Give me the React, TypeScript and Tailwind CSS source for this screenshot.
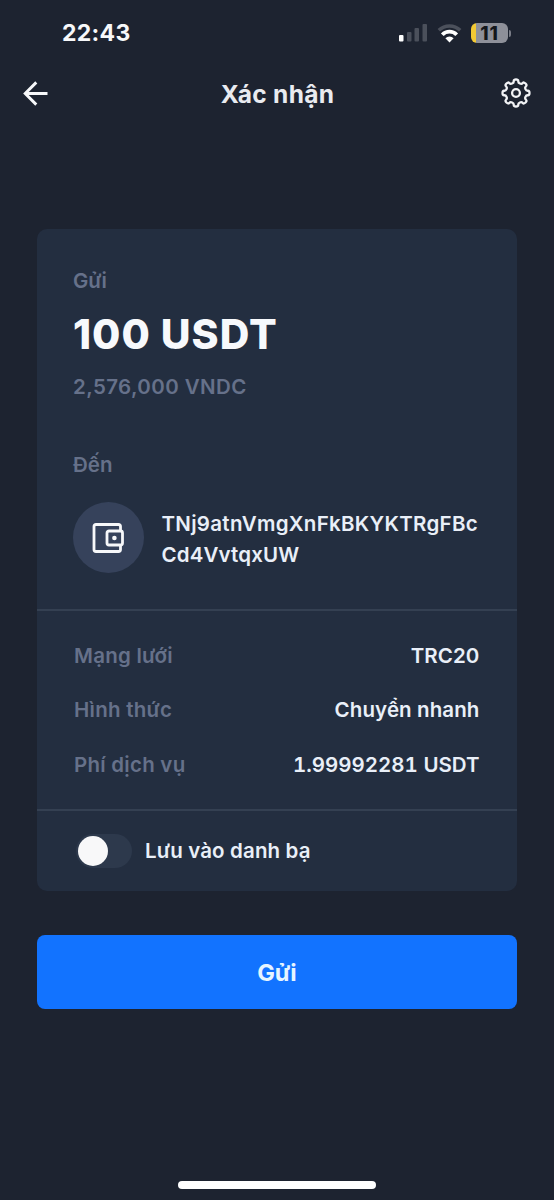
import { useState } from 'react';

const details = [
  { label: 'Mạng lưới', value: 'TRC20', spacing: 'tracking-[0.1px]' },
  { label: 'Hình thức', value: 'Chuyển nhanh', spacing: 'tracking-[0.1px]' },
  { label: 'Phí dịch vụ', value: '1.99992281 USDT', spacing: 'tracking-normal tabular-nums' },
];

// Rounded eight-tooth outline, smoothed through the midpoints of its corners
function gearPath() {
  const corners: [number, number][] = [];
  for (let i = 0; i < 8; i++) {
    const base = i * 45 - 90;
    [[-10, 13.7], [10, 13.7], [12, 10.4], [33, 10.4]].forEach(([deg, r]) => {
      const a = ((base + deg) * Math.PI) / 180;
      corners.push([15 + r * Math.cos(a), 15 + r * Math.sin(a)]);
    });
  }
  const mid = (i: number) => {
    const [a, b] = [corners[i % 32], corners[(i + 1) % 32]];
    return `${((a[0] + b[0]) / 2).toFixed(2)} ${((a[1] + b[1]) / 2).toFixed(2)}`;
  };
  return `M${mid(31)}` + corners.map((c, i) => `Q${c[0].toFixed(2)} ${c[1].toFixed(2)} ${mid(i)}`).join('') + 'Z';
}

function StatusBar() {
  return (
    <div className="flex h-[66px] items-center justify-between pl-[62px] pr-[43px]">
      <span className="pt-px text-[23px] font-bold leading-none tracking-[0.3px] text-[#f7f8fa]">22:43</span>
      <div className="flex items-center">
        <svg width="28" height="18" viewBox="0 0 28 18">
          <rect x="0" y="11" width="4.5" height="6.5" rx="1" fill="#fff" />
          <rect x="8" y="8" width="4.5" height="9.5" rx="1" fill="#4b505b" />
          <rect x="15.5" y="4" width="4.5" height="13.5" rx="1" fill="#4b505b" />
          <rect x="23.5" y="0" width="4.5" height="17.5" rx="1" fill="#4b505b" />
        </svg>
        <svg className="ml-2.5" width="25" height="19" viewBox="0 0 25 19">
          <path d="M1.8 6.3A15.5 15.5 0 0 1 23.2 6.3" fill="none" stroke="#4b505b" strokeWidth="3.6" />
          <path d="M5.3 10.7A10 10 0 0 1 19.7 10.7" fill="none" stroke="#fff" strokeWidth="3.8" />
          <path d="M8.4 14.3A5.5 5.5 0 0 1 16.6 14.3L12.5 18.4Z" fill="#fff" />
        </svg>
        <div className="ml-[9px] flex h-5 w-[37px] items-center justify-center rounded-md bg-linear-to-r from-[#f3c934] from-14% to-[#8e9099] to-14% text-[19px] font-extrabold leading-none tracking-[0.8px] text-[#14161b]">
          11
        </div>
        <div className="ml-[1px] h-[7px] w-[2px] rounded-r-full bg-[#7a7d87]" />
      </div>
    </div>
  );
}

function Header() {
  return (
    <div className="flex h-[54px] items-center justify-between pl-[23px] pr-[23px]">
      <button aria-label="Quay lại">
        <svg width="26" height="26" viewBox="0 0 26 26" fill="none" stroke="#f7f8fa" strokeWidth="2.9">
          <path d="M24.5 13.5H2.5M13.3 2.4L2.2 13.5L13.3 24.6" />
        </svg>
      </button>
      <h1 className="pl-[5px] pt-0.5 text-[24.5px] font-bold leading-none tracking-[0.3px] text-[#e9ebf0]">Xác nhận</h1>
      <button aria-label="Cài đặt">
        <svg width="30" height="30" viewBox="0 0 30 30" fill="none" stroke="#f2f3f6" strokeWidth="2.3">
          <path d={gearPath()} />
          <circle cx="15" cy="15" r="3.9" />
        </svg>
      </button>
    </div>
  );
}

export default function App() {
  const [saved, setSaved] = useState(false);

  return (
    <div className="flex h-[1200px] w-full flex-col bg-[#1d2330] font-['Inter','Liberation_Sans',sans-serif]">
      <StatusBar />
      <Header />

      <main className="mt-[109px] flex flex-col px-[37px]">
        <section className="h-[662px] rounded-[10px] bg-[#232e40]">
          {/* Amount and recipient */}
          <div className="h-[380px] px-9 pt-[37px]">
            <p className="text-[20.5px] font-semibold leading-[30px] text-[#66718a]">Gửi</p>
            <p className="mt-[11px] text-[41px] font-extrabold leading-[54px] tracking-[1px] text-[#f7f9fc]">100 USDT</p>
            <p className="mt-[11px] text-[20.5px] font-semibold leading-[30px] tracking-[0.4px] text-[#66718a]">2,576,000 VNDC</p>
            <p className="mt-12 text-[20.5px] font-semibold leading-[30px] text-[#66718a]">Đến</p>
            <div className="mt-[22px] flex items-center">
              <div className="flex size-[71px] shrink-0 items-center justify-center rounded-full bg-[#36425b]">
                <svg className="-translate-x-px" width="32" height="30" viewBox="0 0 32 30" fill="none" stroke="#f7f8fa" strokeWidth="2.8" strokeLinejoin="round">
                  <path d="M28.5 8V3.5Q28.5 1.5 26.5 1.5H4Q2 1.5 2 3.5V26.5Q2 28.5 4 28.5H26.5Q28.5 28.5 28.5 26.5V22" />
                  <rect x="15" y="8" width="15.5" height="14" rx="2" />
                  <circle cx="22.4" cy="15" r="2.3" fill="#f7f8fa" stroke="none" />
                </svg>
              </div>
              <p className="ml-[17.5px] pt-0.5 text-[20.5px] font-semibold leading-[31px] tracking-[0.3px] text-[#e9eff8]">
                TNj9atnVmgXnFkBKYKTRgFBc
                <br />
                <span className="tracking-[0.15px]">Cd4VvtqxUW</span>
              </p>
            </div>
          </div>

          {/* Transfer details */}
          <div className="flex h-[202px] flex-col border-y-2 border-[#344052] pl-[37px] pr-[37.5px] pt-[18px]">
            {details.map((item) => (
              <div key={item.label} className="flex h-[54.5px] items-center justify-between text-[20.5px]">
                <span className="font-semibold tracking-[0.25px] text-[#66718a]">{item.label}</span>
                <span className={`font-semibold text-[#e9eff8] ${item.spacing}`}>{item.value}</span>
              </div>
            ))}
          </div>

          <div className="flex h-20 items-center pl-[39px]">
            <button
              role="switch"
              aria-checked={saved}
              aria-label="Lưu vào danh bạ"
              onClick={() => setSaved(!saved)}
              className={`flex h-[34px] w-14 items-center rounded-full px-0.5 ${saved ? 'justify-end bg-[#1273ff]' : 'bg-[#2d394c]'}`}
            >
              <span className="size-[30px] rounded-full bg-[#f8f8f9]" />
            </button>
            <span className="ml-[13px] pt-px text-[20.5px] font-semibold tracking-[0.15px] text-[#e9eff8]">Lưu vào danh bạ</span>
          </div>
        </section>

        <button className="mt-11 h-[74px] rounded-lg bg-[#1273ff] pt-0.5 text-[23.5px] font-bold text-[#e6f5ff]">Gửi</button>
      </main>

      {/* Home indicator */}
      <div className="mx-auto mb-[11px] mt-auto h-2 w-[198px] rounded-full bg-white" />
    </div>
  );
}
